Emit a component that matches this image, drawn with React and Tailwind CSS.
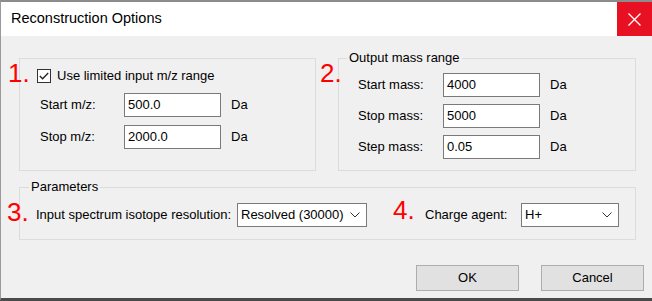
import React from 'react';

const font = { fontFamily: '"Segoe UI", "Liberation Sans", Arial, sans-serif' };

function Field({ label, value, labelW }) {
    return (
        <div className="flex items-center h-[24px]">
            <span className={`${labelW} text-[13px] text-black whitespace-nowrap`}>{label}</span>
            <div className="w-[97px] h-[24px] bg-white border border-[#7a7a7a] flex items-center pl-[3px] text-[13px] text-black">
                {value}
            </div>
            <span className="ml-[10px] text-[13px] text-black">Da</span>
        </div>
    );
}

function Combo({ value, width }) {
    return (
        <div className={`${width} h-[24px] bg-white border border-[#7a7a7a] flex items-center justify-between pl-[3px] pr-[6px] text-[13px] text-black`}>
            <span className="whitespace-nowrap">{value}</span>
            <svg width="10" height="6" viewBox="0 0 10 6" className="shrink-0">
                <path d="M0.5 0.5 L5 5 L9.5 0.5" fill="none" stroke="#333" strokeWidth="1" />
            </svg>
        </div>
    );
}

function Marker({ children, className }) {
    return (
        <span className={`absolute text-[26px] leading-[26px] text-[#ff0000] ${className}`} style={{ fontFamily: '"Liberation Sans", Arial, sans-serif' }}>
            {children}
        </span>
    );
}

export default function App() {
    return (
        <div className="relative w-[652px] h-[301px] overflow-hidden bg-[#f0f0f0] border-t-2 border-l border-b-[3px] border-t-[#8c8c8c] border-l-[#9a9a9a] border-b-[#4a4a4a] flex flex-col" style={font}>
            {/* title bar */}
            <div className="h-[34px] bg-white flex items-center justify-between shrink-0">
                <span className="pl-[10px] text-[14.5px] text-black">Reconstruction Options</span>
                <div className="w-[35px] h-[34px] bg-[#e81123] flex items-center justify-center">
                    <svg width="13" height="13" viewBox="0 0 13 13">
                        <path d="M0.5 0.5 L12.5 12.5 M12.5 0.5 L0.5 12.5" stroke="#fff" strokeWidth="1.3" fill="none" />
                    </svg>
                </div>
            </div>

            <div className="flex flex-col pt-[22px]">
                <div className="flex">
                    {/* limited input range */}
                    <div className="ml-[18px] w-[297px] h-[113px] border border-[#dcdcdc]">
                        <label className="mt-[10px] ml-[17px] flex items-center h-[14px]">
                            <span className="w-[14px] h-[14px] bg-white border border-[#333] flex items-center justify-center">
                                <svg width="10" height="8" viewBox="0 0 10 8">
                                    <path d="M0.8 4 L3.6 6.8 L9.2 1" fill="none" stroke="#222" strokeWidth="1.3" />
                                </svg>
                            </span>
                            <span className="ml-[6px] text-[13px] text-black whitespace-nowrap">Use limited input m/z range</span>
                        </label>
                        <div className="ml-[20px] mt-[10px] flex flex-col gap-[8px]">
                            <Field label="Start m/z:" value="500.0" labelW="w-[84px]" />
                            <Field label="Stop m/z:" value="2000.0" labelW="w-[84px]" />
                        </div>
                    </div>

                    {/* output mass range */}
                    <div className="relative ml-[22px] w-[298px] h-[113px] border border-[#dcdcdc]">
                        <span className="absolute -top-[9px] left-[8px] px-[2px] bg-[#f0f0f0] text-[13px] leading-[16px] text-black">Output mass range</span>
                        <div className="ml-[19px] mt-[14px] flex flex-col gap-[7px]">
                            <Field label="Start mass:" value="4000" labelW="w-[85px]" />
                            <Field label="Stop mass:" value="5000" labelW="w-[85px]" />
                            <Field label="Step mass:" value="0.05" labelW="w-[85px]" />
                        </div>
                    </div>
                </div>

                {/* parameters */}
                <div className="relative ml-[18px] mt-[16px] w-[617px] h-[53px] border border-[#dcdcdc]">
                    <span className="absolute -top-[9px] left-[9px] px-[2px] bg-[#f0f0f0] text-[13px] leading-[16px] text-black">Parameters</span>
                    <div className="mt-[15px] ml-[16px] flex items-center">
                        <span className="w-[201px] text-[13px] text-black whitespace-nowrap">Input spectrum isotope resolution:</span>
                        <Combo value="Resolved (30000)" width="w-[130px]" />
                        <span className="ml-[58px] w-[96px] text-[13px] text-black whitespace-nowrap">Charge agent:</span>
                        <Combo value="H+" width="w-[98px]" />
                    </div>
                </div>

                {/* buttons */}
                <div className="flex justify-end pr-[8px] mt-[25px] gap-[22px]">
                    <button className="w-[103px] h-[26px] bg-[#e1e1e1] border border-[#adadad] text-[13px] text-black">OK</button>
                    <button className="w-[103px] h-[26px] bg-[#e1e1e1] border border-[#adadad] text-[13px] text-black">Cancel</button>
                </div>
            </div>

            <Marker className="left-[7px] top-[58px]">1.</Marker>
            <Marker className="left-[319px] top-[58px]">2.</Marker>
            <Marker className="left-[6px] top-[197px]">3.</Marker>
            <Marker className="left-[392px] top-[195px]">4.</Marker>
        </div>
    );
}
